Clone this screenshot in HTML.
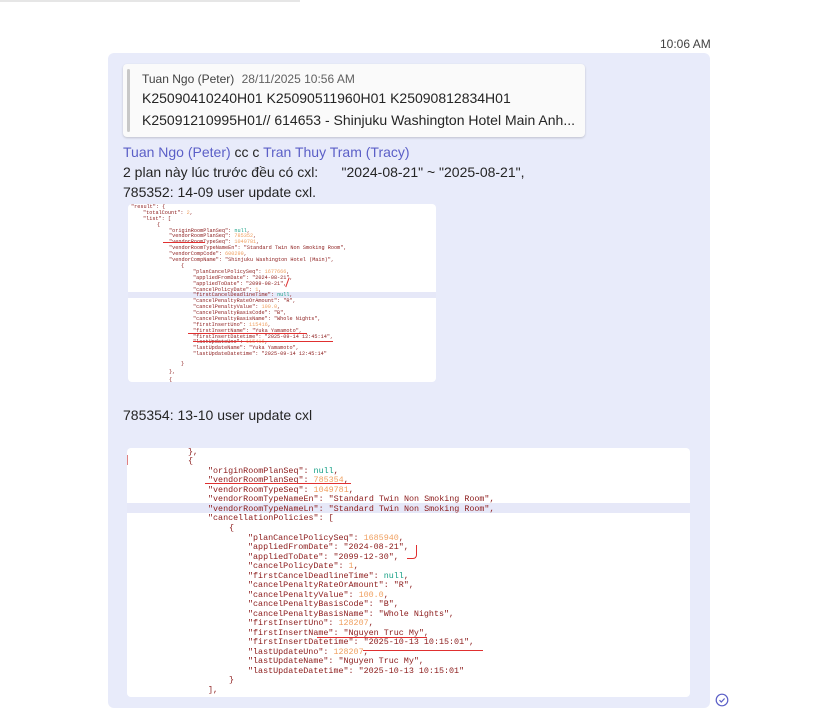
<!DOCTYPE html>
<html><head><meta charset="utf-8"><style>
*{margin:0;padding:0;box-sizing:border-box}
body{width:836px;height:719px;background:#fff;font-family:"Liberation Sans","Noto Sans CJK SC",sans-serif;position:relative;overflow:hidden;color:#242424}
.a{position:absolute;white-space:nowrap}
.bub{position:absolute;left:108px;top:53px;width:602px;height:655px;background:#e8ebfa;border-radius:6px}
.q{position:absolute;left:123px;top:64px;width:462px;height:73px;background:#fafafa;border-radius:4px;box-shadow:0 1px 2px rgba(0,0,0,.18)}
.q:before{content:"";position:absolute;left:4px;top:5px;bottom:5px;width:3px;background:#c8c8c8;border-radius:2px}
.t{font-size:14px;line-height:19px}
.lnk{color:#5b5fc7}
.code{position:absolute;background:#fff;border-radius:4px;overflow:hidden;font-family:"Liberation Mono",monospace}
.c2 div{position:absolute;white-space:pre;font-size:8.4px;line-height:10px;color:#8b1a1a}
.c1 div{position:absolute;white-space:pre;font-size:5.2px;line-height:5px;color:#8b1a1a}
.n{color:#f0a060}.nl{color:#16a085}
.hl{background:#e6e8f8}
.c1 .red,.c2 .red{position:absolute;border-top:1px solid #e03030;height:0}
</style></head><body>
<div class="a" style="left:0;top:0;width:300px;height:2px;background:#e6e6e6"></div>
<div class="a" style="left:660px;top:37px;font-size:12px;color:#424242">10:06 AM</div>
<div class="bub"></div>
<div class="q"></div>
<div class="a" style="left:142px;top:72px;font-size:12px;color:#424242">Tuan Ngo (Peter) <span style="color:#616161;margin-left:4px">28/11/2025 10:56 AM</span></div>
<div class="a t" style="left:142px;top:89px">K25090410240H01 K25090511960H01 K25090812834H01</div>
<div class="a t" style="left:142px;top:111px">K25091210995H01// 614653 - Shinjuku Washington Hotel Main Anh...</div>
<div class="a t" style="left:123px;top:143px"><span class="lnk">Tuan Ngo (Peter)</span> cc c <span class="lnk">Tran Thuy Tram (Tracy)</span></div>
<div class="a t" style="left:123px;top:163px">2 plan này lúc trước đều có cxl:&nbsp;&nbsp;&nbsp;&nbsp;&nbsp; "2024-08-21" ~ "2025-08-21",</div>
<div class="a t" style="left:123px;top:183px">785352: 14-09 user update cxl.</div>

<div class="code c1" style="left:128px;top:204px;width:308px;height:178px">
<div class="hl" style="left:0;top:88px;width:308px;height:6px"></div>
<div style="left:3px;top:1px">"result": {</div>
<div style="left:15px;top:7px">"totalCount": <span class="n">2</span>,</div>
<div style="left:15px;top:13px">"list": [</div>
<div style="left:29px;top:19px">{</div>
<div style="left:41px;top:25px">"originRoomPlanSeq": <span class="nl">null</span>,</div>
<div style="left:41px;top:30px">"vendorRoomPlanSeq": <span class="n">785352</span>,</div>
<div style="left:41px;top:36px">"vendorRoomTypeSeq": <span class="n">1049781</span>,</div>
<div style="left:41px;top:42px">"vendorRoomTypeNameEn": "Standard Twin Non Smoking Room",</div>
<div style="left:41px;top:48px">"vendorCompCode": <span class="n">600299</span>,</div>
<div style="left:41px;top:54px">"vendorCompName": "Shinjuku Washington Hotel (Main)",</div>
<div style="left:53px;top:60px">{</div>
<div style="left:65px;top:66px">"planCancelPolicySeq": <span class="n">1677666</span>,</div>
<div style="left:65px;top:72px">"appliedFromDate": "2024-08-21",</div>
<div style="left:65px;top:78px">"appliedToDate": "2099-08-21",</div>
<div style="left:65px;top:84px">"cancelPolicyDate": <span class="n">1</span>,</div>
<div style="left:65px;top:89px">"firstCancelDeadlineTime": <span class="nl">null</span>,</div>
<div style="left:65px;top:95px">"cancelPenaltyRateOrAmount": "R",</div>
<div style="left:65px;top:101px">"cancelPenaltyValue": <span class="n">100.0</span>,</div>
<div style="left:65px;top:107px">"cancelPenaltyBasisCode": "B",</div>
<div style="left:65px;top:113px">"cancelPenaltyBasisName": "Whole Nights",</div>
<div style="left:65px;top:119px">"firstInsertUno": <span class="n">115416</span>,</div>
<div style="left:65px;top:125px">"firstInsertName": "Yuka Yamamoto",</div>
<div style="left:65px;top:131px">"firstInsertDatetime": "2025-09-14 12:45:14",</div>
<div style="left:65px;top:136px">"lastUpdateUno": <span class="n">115416</span>,</div>
<div style="left:65px;top:142px">"lastUpdateName": "Yuka Yamamoto",</div>
<div style="left:65px;top:148px">"lastUpdateDatetime": "2025-09-14 12:45:14"</div>
<div style="left:53px;top:158px">}</div>
<div style="left:41px;top:166px">},</div>
<div style="left:41px;top:174px">{</div>
<div class="red" style="left:35px;top:38px;width:42px"></div>
<div class="red" style="left:60px;top:129px;width:119px"></div>
<div class="red" style="left:65px;top:137px;width:140px"></div>
<div style="left:157px;top:73px;width:3px;height:10px;border-right:1px solid #e03030;transform:rotate(20deg)"></div>
</div>

<div class="a t" style="left:123px;top:406px">785354: 13-10 user update cxl</div>

<div class="code c2" style="left:127px;top:448px;width:563px;height:249px">
<div class="hl" style="left:0;top:55px;width:563px;height:10px"></div>
<div style="left:0;top:7px;width:1px;height:10px;background:#e08080"></div>
<div style="left:61px;top:-1px">},</div>
<div style="left:61px;top:8px">{</div>
<div style="left:81px;top:18px">"originRoomPlanSeq": <span class="nl">null</span>,</div>
<div style="left:81px;top:27px">"vendorRoomPlanSeq": <span class="n">785354</span>,</div>
<div style="left:81px;top:37px">"vendorRoomTypeSeq": <span class="n">1049781</span>,</div>
<div style="left:81px;top:46px">"vendorRoomTypeNameEn": "Standard Twin Non Smoking Room",</div>
<div style="left:81px;top:56px">"vendorRoomTypeNameLn": "Standard Twin Non Smoking Room",</div>
<div style="left:81px;top:65px">"cancellationPolicies": [</div>
<div style="left:102px;top:75px">{</div>
<div style="left:121px;top:85px">"planCancelPolicySeq": <span class="n">1685940</span>,</div>
<div style="left:121px;top:94px">"appliedFromDate": "2024-08-21",</div>
<div style="left:121px;top:104px">"appliedToDate": "2099-12-30",</div>
<div style="left:121px;top:113px">"cancelPolicyDate": <span class="n">1</span>,</div>
<div style="left:121px;top:123px">"firstCancelDeadlineTime": <span class="nl">null</span>,</div>
<div style="left:121px;top:132px">"cancelPenaltyRateOrAmount": "R",</div>
<div style="left:121px;top:142px">"cancelPenaltyValue": <span class="n">100.0</span>,</div>
<div style="left:121px;top:151px">"cancelPenaltyBasisCode": "B",</div>
<div style="left:121px;top:161px">"cancelPenaltyBasisName": "Whole Nights",</div>
<div style="left:121px;top:170px">"firstInsertUno": <span class="n">128207</span>,</div>
<div style="left:121px;top:180px">"firstInsertName": "Nguyen Truc My",</div>
<div style="left:121px;top:189px">"firstInsertDatetime": "2025-10-13 10:15:01",</div>
<div style="left:121px;top:199px">"lastUpdateUno": <span class="n">128207</span>,</div>
<div style="left:121px;top:208px">"lastUpdateName": "Nguyen Truc My",</div>
<div style="left:121px;top:218px">"lastUpdateDatetime": "2025-10-13 10:15:01"</div>
<div style="left:102px;top:227px">}</div>
<div style="left:81px;top:237px">],</div>
<div class="red" style="left:78px;top:35px;width:146px"></div>
<div class="red" style="left:190px;top:189px;width:110px"></div>
<div class="red" style="left:236px;top:202px;width:120px"></div>
<div style="left:280px;top:97px;width:10px;height:14px;border-right:1px solid #e03030;border-bottom:1px solid #e03030;border-radius:0 0 4px 0"></div>
</div>
<svg class="a" style="left:715px;top:693px" width="14" height="14" viewBox="0 0 14 14"><circle cx="7" cy="7" r="5.8" fill="none" stroke="#5b5fc7" stroke-width="1.2"/><path d="M4.5 7.2 L6.3 9 L9.6 5.5" fill="none" stroke="#5b5fc7" stroke-width="1.2"/></svg>
</body></html>
